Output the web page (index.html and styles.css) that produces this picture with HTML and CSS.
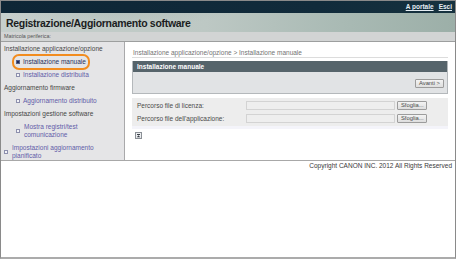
FILE: index.html
```html
<!DOCTYPE html>
<html lang="it">
<head>
    <meta charset="UTF-8">
    <title>Registrazione/Aggiornamento software</title>
    <link rel="stylesheet" href="styles.css">
</head>
<body>
    <div class="frame">
        <div class="topbar">
            <a href="#">A portale</a>
            <a href="#">Esci</a>
        </div>

        <div class="header">
            <h1>Registrazione/Aggiornamento software</h1>
        </div>

        <div class="devicebar">Matricola periferica:</div>

        <div class="main">
            <nav class="sidebar">
                <div class="entry group">Installazione applicazione/opzione</div>
                <div class="entry sub">
                    <a href="#" class="link current"><i class="bullet"></i>Installazione manuale</a>
                </div>
                <div class="entry sub">
                    <a href="#" class="link"><i class="bullet"></i>Installazione distribuita</a>
                </div>
                <div class="entry group">Aggiornamento firmware</div>
                <div class="entry sub">
                    <a href="#" class="link"><i class="bullet"></i>Aggiornamento distribuito</a>
                </div>
                <div class="entry group">Impostazioni gestione software</div>
                <div class="entry sub">
                    <a href="#" class="link"><i class="bullet"></i><span>Mostra registri/test<br>comunicazione</span></a>
                </div>
                <div class="entry top">
                    <a href="#" class="link"><i class="bullet"></i><span>Impostazioni aggiornamento<br>pianificato</span></a>
                </div>
            </nav>

            <div class="content">
                <div class="crumb">Installazione applicazione/opzione &gt; Installazione manuale</div>

                <div class="panel">
                    <div class="panel-title">Installazione manuale</div>
                    <div class="panel-body">
                        <button class="btn">Avanti &gt;</button>
                    </div>
                </div>

                <div class="fields">
                    <div class="field">
                        <span class="label">Percorso file di licenza:</span>
                        <span class="input"></span>
                        <button class="btn">Sfoglia...</button>
                    </div>
                    <div class="field">
                        <span class="label">Percorso file dell'applicazione:</span>
                        <span class="input"></span>
                        <button class="btn">Sfoglia...</button>
                    </div>
                </div>

                <a href="#" class="totop" title="Inizio pagina">
                    <svg width="7" height="7" viewBox="0 0 7 7">
                        <rect x="0.5" y="0.5" width="6" height="6" fill="#eceef0" stroke="#8a8f95"/>
                        <rect x="2" y="2" width="3" height="1" fill="#3a3f48"/>
                        <path d="M3.5 3.2 L5.2 5.2 L1.8 5.2 Z" fill="#3a3f48"/>
                    </svg>
                </a>
            </div>
        </div>

        <div class="footer">Copyright CANON INC. 2012 All Rights Reserved</div>
    </div>
</body>
</html>
```

FILE: styles.css
```css
* {
    margin: 0;
    padding: 0;
    box-sizing: border-box;
}

body {
    font-family: 'Liberation Sans', Arial, sans-serif;
    background: #fff;
    color: #3c3c3c;
}

.frame {
    width: 456px;
    height: 259px;
    border: 1px solid #8a8a8a;
    border-bottom: 2px solid #ababab;
    display: flex;
    flex-direction: column;
}

/* top strip */
.topbar {
    height: 12px;
    background: linear-gradient(90deg, #0e2636 0%, #112b3b 70%, #16323f 100%);
    display: flex;
    justify-content: flex-end;
    align-items: center;
    gap: 5px;
    padding-right: 3px;
}

.topbar a {
    color: #e6eef4;
    font-size: 6.5px;
    font-weight: bold;
    line-height: 8px;
}

.header {
    height: 19px;
    background:
        radial-gradient(ellipse 180px 30px at 120px -8px, rgba(150, 170, 165, 0.35), rgba(150, 170, 165, 0) 70%),
        linear-gradient(90deg, #c6cfcc 0%, #bdc8c4 45%, #a9bab4 75%, #9cafa8 100%);
    display: flex;
    align-items: center;
    padding-left: 5px;
}

.header h1 {
    font-size: 10.5px;
    letter-spacing: -0.3px;
    color: #1b1d1e;
    font-weight: bold;
}

.devicebar {
    height: 10px;
    background: #d2d4d4;
    border-bottom: 1px solid #9d9f9f;
    font-size: 5.4px;
    line-height: 9px;
    color: #555;
    padding-left: 3px;
}

.main {
    display: flex;
    height: 118px;
}

/* left menu */
.sidebar {
    width: 124px;
    background: #e5e5e7;
    border-right: 1px solid #a9a9ab;
    padding-top: 1px;
    font-size: 6.5px;
    line-height: 8px;
}

.entry {
    padding: 2px 0 3px;
}

.group {
    padding-left: 3px;
    color: #454545;
}

.sub {
    padding-left: 15px;
}

.top {
    padding-left: 3px;
}

.link {
    display: inline-flex;
    align-items: center;
    gap: 3px;
    color: #625ca8;
    text-decoration: none;
}

.top .link {
    gap: 4px;
}

.sub .link span {
    padding-left: 1px;
}

.link.current {
    color: #26305e;
    outline: 2px solid #f28c1f;
    outline-offset: 2px;
    border-radius: 3px;
}

.bullet {
    width: 4px;
    height: 4px;
    border: 1px solid #8d8fad;
    background: #f4f4f8;
    flex-shrink: 0;
}

.current .bullet {
    background: #1f2a55;
    border-color: #55608a;
}

/* right side */
.content {
    flex: 1;
    padding: 7px 7px 0;
    font-size: 6.5px;
    line-height: 8px;
}

.crumb {
    color: #737373;
    border-bottom: 1px solid #dcdcdc;
    padding-left: 1px;
}

.panel {
    margin-top: 3px;
    border: 1px solid #b4b8bb;
    border-top: none;
}

.panel-title {
    height: 11px;
    background: #56646b;
    color: #fff;
    font-weight: bold;
    line-height: 11px;
    padding-left: 4px;
}

.panel-body {
    background: #e1e3e5;
    height: 21px;
    display: flex;
    justify-content: flex-end;
    align-items: flex-start;
    padding: 7px 3px 0;
}

.btn {
    font-family: inherit;
    font-size: 5.8px;
    line-height: 7px;
    height: 9px;
    padding: 0 3px;
    color: #4a4a4a;
    background: linear-gradient(#f3f3f3, #dedede);
    border: 1px solid #9c9c9c;
    border-radius: 1px;
}

.fields {
    margin-top: 4px;
    background: #ededed;
    padding: 3px 0;
    border-bottom: 3px solid #f4f4fa;
    display: flex;
    flex-direction: column;
    gap: 4px;
}

.field {
    display: flex;
    align-items: center;
    height: 9px;
    padding-left: 5px;
}

.label {
    width: 109px;
    color: #4a4a4a;
}

.input {
    width: 149px;
    height: 9px;
    background: #eeeeee;
    border: 1px solid #d3d3d3;
    margin-right: 2px;
}

.field .btn {
    width: 30px;
}

.totop {
    display: block;
    width: 7px;
    height: 7px;
    margin: 3px 0 0 3px;
}

.totop svg {
    display: block;
}

.footer {
    flex: 1;
    border-top: 1px solid #a8a8a8;
    text-align: right;
    font-size: 6.5px;
    line-height: 8px;
    padding: 1px 3px 0 0;
    color: #3a3a3a;
}
```
